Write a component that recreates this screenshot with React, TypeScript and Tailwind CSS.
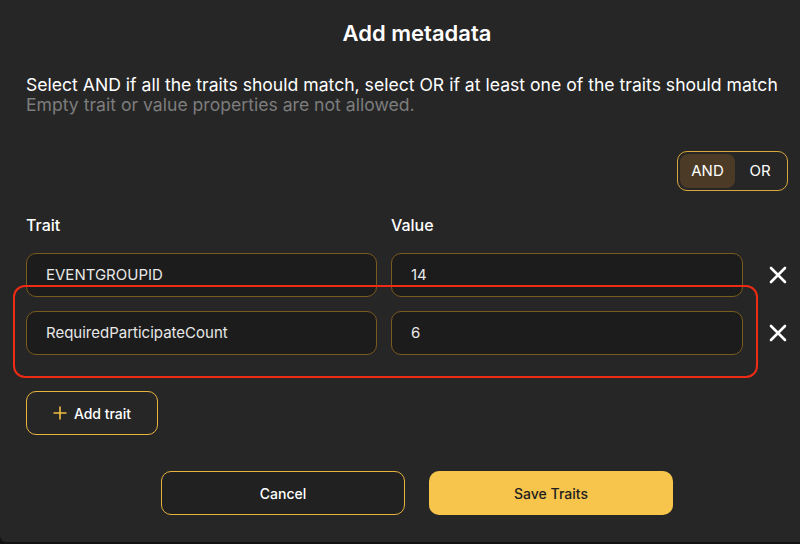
const rows = [
  { trait: "EVENTGROUPID", value: "14" },
  { trait: "RequiredParticipateCount", value: "6" },
];

function CloseIcon() {
  return (
    <svg width="18" height="18" viewBox="0 0 18 18" fill="none">
      <path d="M2 2L16 16M16 2L2 16" stroke="white" strokeWidth="2.6" strokeLinecap="round" />
    </svg>
  );
}

function PlusIcon() {
  return (
    <svg width="14" height="14" viewBox="0 0 14 14" fill="none">
      <path d="M7 0.5V13.5M0.5 7H13.5" stroke="#f2bd45" strokeWidth="1.6" />
    </svg>
  );
}

export default function App() {
  return (
    <div
      className="relative h-[544px] w-[800px] overflow-hidden bg-[#121212]"
      style={{ fontFamily: "Inter, 'Noto Sans', sans-serif" }}
    >
      <div className="h-[542px] w-[834px] rounded-b-[6px] bg-[#262626] px-[26px] pt-[19px]">
        <h1 className="text-center text-[22px] leading-[28px] font-semibold text-white">
          Add metadata
        </h1>

        <div className="mt-[28px] text-[17.6px] leading-[20px]">
          <p className="text-white">
            Select AND if all the traits should match, select OR if at least one of the traits should match
          </p>
          <p className="text-[#7d7d7d]">Empty trait or value properties are not allowed.</p>
        </div>

        <div className="mt-[36px] flex justify-end pr-[20px]">
          <div className="flex h-[40px] w-[111px] items-center rounded-[10px] border border-[#d9a73c] p-[2px] text-[15px]">
            <div className="flex h-full w-[55px] items-center justify-center rounded-[8px] bg-[#4b3a26] text-white">
              AND
            </div>
            <div className="flex h-full flex-1 items-center justify-center text-white">OR</div>
          </div>
        </div>

        <div className="mt-[24px] flex text-[16px] leading-[20px] font-medium text-white">
          <span className="w-[365px]">Trait</span>
          <span>Value</span>
        </div>

        <div className="mt-[18px] flex flex-col gap-[14px]">
          {rows.map((row) => (
            <div key={row.trait} className="flex items-center">
              <div className="flex h-[44px] w-[351px] items-center rounded-[10px] border border-[#7a5b1e] bg-[#1c1c1c] pl-[19px] text-[15px] text-[#e8e8e8]">
                {row.trait}
              </div>
              <div className="ml-[14px] flex h-[44px] w-[352px] items-center rounded-[10px] border border-[#7a5b1e] bg-[#1c1c1c] pl-[19px] text-[15px] text-[#e8e8e8]">
                {row.value}
              </div>
              <button type="button" className="ml-[17px] flex h-[36px] w-[36px] items-center justify-center">
                <CloseIcon />
              </button>
            </div>
          ))}
        </div>

        <button
          type="button"
          className="mt-[36px] flex h-[44px] w-[132px] items-center justify-center gap-[7px] rounded-[10px] border border-[#e8b43f] text-[14px] font-medium text-white"
        >
          <PlusIcon />
          Add trait
        </button>

        <div className="mt-[36px] flex justify-center gap-[24px]">
          <button
            type="button"
            className="h-[44px] w-[244px] rounded-[10px] border border-[#e8b43f] bg-[#212121] text-[14px] font-medium text-white"
          >
            Cancel
          </button>
          <button
            type="button"
            className="h-[44px] w-[244px] rounded-[10px] bg-[#f7c44c] text-[14px] font-medium text-[#1e1e1e]"
          >
            Save Traits
          </button>
        </div>
      </div>

      <div className="pointer-events-none absolute top-[285px] left-[13px] h-[93px] w-[745px] rounded-[12px] border-[2.5px] border-[#ee2b14]" />
    </div>
  );
}
